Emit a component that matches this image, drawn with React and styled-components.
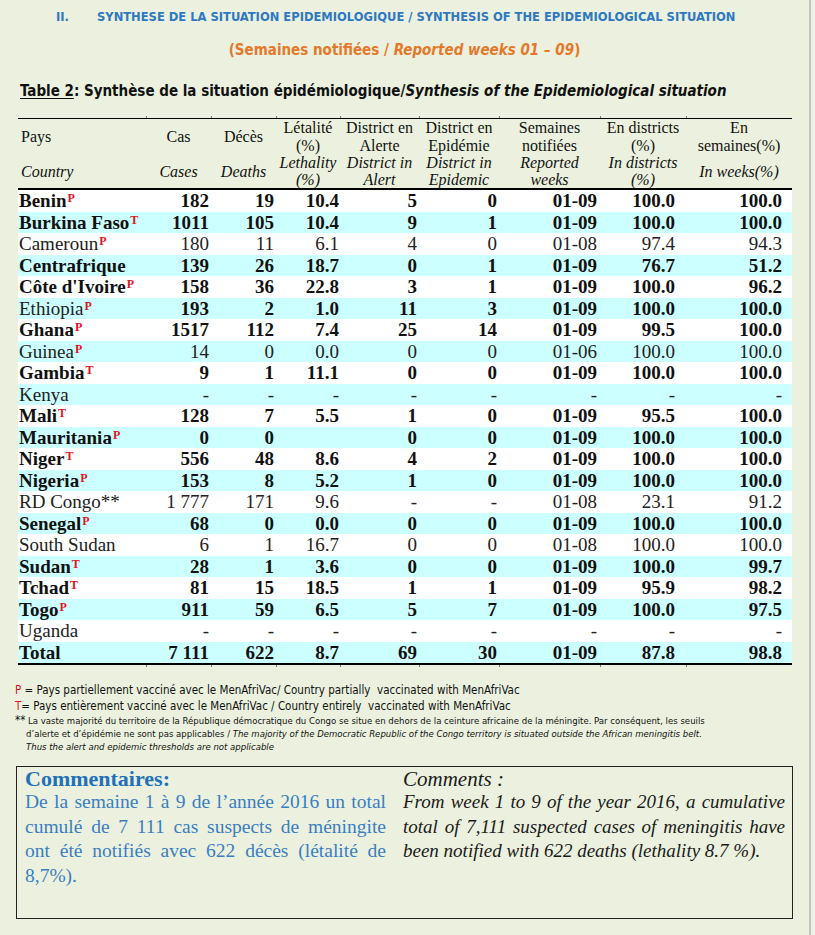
import React from "react";
import styled, { createGlobalStyle } from "styled-components";

const SANS = `"Liberation Sans Narrow", "DejaVu Sans Condensed", "Liberation Sans", sans-serif`;
const SERIF = `"Liberation Serif", "Times New Roman", serif`;

const GlobalStyle = createGlobalStyle`
  html, body { margin: 0; padding: 0; background: #eef0e8; }
  body { font-family: ${SERIF}; color: #111; }
`;

const Page = styled.div`
  width: 811px;
  min-height: 935px;
  box-sizing: border-box;
  padding-top: 8px;
  background: #ebf1de;
  border-right: 2px solid #c3c6bc;
`;

const SectionTitle = styled.h2`
  display: flex;
  margin: 0;
  padding-left: 56px;
  font: bold 12.8px/18px ${SANS};
  color: #2e78c2;
`;

const Roman = styled.span`
  width: 41px;
`;

const Weeks = styled.div`
  margin-top: 14px;
  text-align: center;
  font: bold 15px/20px ${SANS};
  color: #e4782b;
  em { font-style: italic; }
`;

const Caption = styled.div`
  margin-top: 21px;
  padding-left: 20px;
  font: bold 15px/20px ${SANS};
  color: #111;
  u { text-decoration-thickness: 1px; text-underline-offset: 2px; }
  em { font-style: italic; }
`;

const Table = styled.table`
  margin: 15px 0 0 18px;
  width: 774px;
  table-layout: fixed;
  border-collapse: separate;
  border-spacing: 0;
  font-family: ${SERIF};
`;

const TickRow = styled.tr`
  td {
    height: 2px;
    padding: 0;
    line-height: 0;
    font-size: 0;
  }
  td + td { box-shadow: inset 1px 0 #7a7a7a; }
`;

const HeadCell = styled.th`
  padding: 0 2px;
  padding-left: ${(p) => (p.$left ? "3px" : "2px")};
  font-size: 16px;
  line-height: ${(p) => (p.$en ? "17px" : "17.5px")};
  font-weight: normal;
  font-style: ${(p) => (p.$en ? "italic" : "normal")};
  text-align: ${(p) => (p.$left ? "left" : "center")};
  vertical-align: middle;
  white-space: nowrap;
  color: #111;
  height: ${(p) => (p.$en ? "34px" : "35px")};
  border-top: ${(p) => (p.$en ? "none" : "1px solid #000")};
  border-bottom: ${(p) => (p.$en ? "2px solid #000" : "none")};
`;

const Row = styled.tr`
  background: ${(p) => (p.$alt ? "#ccffff" : "#ffffff")};
  td {
    border-bottom: ${(p) => (p.$last ? "2px solid #000" : "none")};
  }
`;

const Cell = styled.td`
  height: 21.5px;
  padding: 0 ${(p) => p.$pr}px 0 ${(p) => (p.$name ? "1px" : "0")};
  font-size: 19px;
  line-height: 21px;
  font-weight: ${(p) => (p.$bold ? "bold" : "normal")};
  text-align: ${(p) => (p.$name ? "left" : "right")};
  color: ${(p) => (p.$bold ? "#111" : "#222")};
  white-space: nowrap;
  vertical-align: middle;
`;

const Sup = styled.sup`
  margin-left: 1px;
  font: bold 12px/0 ${SERIF};
  color: #e0141e;
  vertical-align: 5px;
`;

const Notes = styled.div`
  margin: 15px 0 0 15px;
  font-family: ${SANS};
  color: #111;
`;

const NoteLine = styled.div`
  font-size: 11.5px;
  line-height: 16px;
  white-space: nowrap;
`;

const Mark = styled.span`
  color: #e0141e;
`;

const SmallNote = styled.div`
  padding-left: 11px;
  text-indent: -11px;
  font-size: 9.5px;
  line-height: 13px;
  white-space: nowrap;
  b { font-weight: normal; font-size: 11.5px; }
  em { font-style: italic; }
`;

const CommentBox = styled.div`
  display: grid;
  grid-template-columns: 378px 1fr;
  width: 777px;
  height: 153px;
  box-sizing: border-box;
  margin: 13px 0 0 16px;
  border: 1px solid #222;
`;

const CommentCol = styled.div`
  padding: ${(p) => (p.$en ? "1px 7px 0 8px" : "1px 9px 0 8px")};
  font-family: ${SERIF};
  color: ${(p) => (p.$en ? "#1a1a1a" : "#3a7ec0")};
`;

const CommentHead = styled.div`
  font-size: ${(p) => (p.$en ? "21px" : "22px")};
  line-height: 22px;
  font-weight: ${(p) => (p.$en ? "normal" : "bold")};
  font-style: ${(p) => (p.$en ? "italic" : "normal")};
  color: ${(p) => (p.$en ? "#1a1a1a" : "#2270b8")};
`;

const CommentText = styled.p`
  margin: 0;
  font-size: ${(p) => (p.$en ? "19px" : "19.5px")};
  line-height: 24.6px;
  font-style: ${(p) => (p.$en ? "italic" : "normal")};
  text-align: justify;
`;

const COLS = [128, 65, 65, 64, 79, 80, 101, 86, 106];
const PAD = [0, 2, 2, 1, 2, 2, 3, 11, 10];

const HEAD_FR = [
  "Pays",
  "Cas",
  "Décès",
  ["Létalité", "(%)"],
  ["District en", "Alerte"],
  ["District en", "Epidémie"],
  ["Semaines", "notifiées"],
  ["En districts", "(%)"],
  ["En", "semaines(%)"],
];

const HEAD_EN = [
  "Country",
  "Cases",
  "Deaths",
  ["Lethality", "(%)"],
  ["District in", "Alert"],
  ["District in", "Epidemic"],
  ["Reported", "weeks"],
  ["In districts", "(%)"],
  "In weeks(%)",
];

const D = ["-", "-", "-", "-", "-", "-", "-", "-"];

// [country, sup, bold name, bold figures, figures]
const ROWS = [
  ["Benin", "P", true, true, ["182", "19", "10.4", "5", "0", "01-09", "100.0", "100.0"]],
  ["Burkina Faso", "T", true, true, ["1011", "105", "10.4", "9", "1", "01-09", "100.0", "100.0"]],
  ["Cameroun", "P", false, false, ["180", "11", "6.1", "4", "0", "01-08", "97.4", "94.3"]],
  ["Centrafrique", "", true, true, ["139", "26", "18.7", "0", "1", "01-09", "76.7", "51.2"]],
  ["Côte d'Ivoire", "P", true, true, ["158", "36", "22.8", "3", "1", "01-09", "100.0", "96.2"]],
  ["Ethiopia", "P", false, true, ["193", "2", "1.0", "11", "3", "01-09", "100.0", "100.0"]],
  ["Ghana", "P", true, true, ["1517", "112", "7.4", "25", "14", "01-09", "99.5", "100.0"]],
  ["Guinea", "P", false, false, ["14", "0", "0.0", "0", "0", "01-06", "100.0", "100.0"]],
  ["Gambia", "T", true, true, ["9", "1", "11.1", "0", "0", "01-09", "100.0", "100.0"]],
  ["Kenya", "", false, false, D],
  ["Mali", "T", true, true, ["128", "7", "5.5", "1", "0", "01-09", "95.5", "100.0"]],
  ["Mauritania", "P", true, true, ["0", "0", "", "0", "0", "01-09", "100.0", "100.0"]],
  ["Niger", "T", true, true, ["556", "48", "8.6", "4", "2", "01-09", "100.0", "100.0"]],
  ["Nigeria", "P", true, true, ["153", "8", "5.2", "1", "0", "01-09", "100.0", "100.0"]],
  ["RD Congo**", "", false, false, ["1\u00a0777", "171", "9.6", "-", "-", "01-08", "23.1", "91.2"]],
  ["Senegal", "P", true, true, ["68", "0", "0.0", "0", "0", "01-09", "100.0", "100.0"]],
  ["South Sudan", "", false, false, ["6", "1", "16.7", "0", "0", "01-08", "100.0", "100.0"]],
  ["Sudan", "T", true, true, ["28", "1", "3.6", "0", "0", "01-09", "100.0", "99.7"]],
  ["Tchad", "T", true, true, ["81", "15", "18.5", "1", "1", "01-09", "95.9", "98.2"]],
  ["Togo", "P", true, true, ["911", "59", "6.5", "5", "7", "01-09", "100.0", "97.5"]],
  ["Uganda", "", false, false, D],
  ["Total", "", true, true, ["7\u00a0111", "622", "8.7", "69", "30", "01-09", "87.8", "98.8"]],
];

function lines(v) {
  if (!Array.isArray(v)) return v;
  return v.map((t, i) => (
    <React.Fragment key={i}>
      {i > 0 && <br />}
      {t}
    </React.Fragment>
  ));
}

function Ticks() {
  return (
    <TickRow>
      {COLS.map((w, i) => (
        <td key={i} />
      ))}
    </TickRow>
  );
}

export default function App() {
  return (
    <>
      <GlobalStyle />
      <Page>
        <SectionTitle>
          <Roman>II.</Roman>
          SYNTHESE DE LA SITUATION EPIDEMIOLOGIQUE / SYNTHESIS OF THE EPIDEMIOLOGICAL SITUATION
        </SectionTitle>

        <Weeks>
          (Semaines notifiées / <em>Reported weeks 01 – 09</em>)
        </Weeks>

        <Caption>
          <u>Table 2</u>: Synthèse de la situation épidémiologique/
          <em>Synthesis of the Epidemiological situation</em>
        </Caption>

        <Table>
          <colgroup>
            {COLS.map((w, i) => (
              <col key={i} style={{ width: w }} />
            ))}
          </colgroup>
          <thead>
            <Ticks />
            <tr>
              {HEAD_FR.map((h, i) => (
                <HeadCell key={i} $left={i === 0}>
                  {lines(h)}
                </HeadCell>
              ))}
            </tr>
            <tr>
              {HEAD_EN.map((h, i) => (
                <HeadCell key={i} $en $left={i === 0}>
                  {lines(h)}
                </HeadCell>
              ))}
            </tr>
          </thead>
          <tbody>
            {ROWS.map(([name, sup, boldName, boldNums, vals], r) => (
              <Row key={name} $alt={r % 2 === 1} $last={r === ROWS.length - 1}>
                <Cell $name $bold={boldName} $pr={0}>
                  {name}
                  {sup && <Sup>{sup}</Sup>}
                </Cell>
                {vals.map((v, i) => (
                  <Cell key={i} $bold={boldNums} $pr={PAD[i + 1]}>
                    {v}
                  </Cell>
                ))}
              </Row>
            ))}
          </tbody>
          <tfoot>
            <Ticks />
          </tfoot>
        </Table>

        <Notes>
          <NoteLine>
            <Mark>P</Mark> = Pays partiellement vacciné avec le MenAfriVac/ Country partially&nbsp; vaccinated with MenAfriVac
          </NoteLine>
          <NoteLine>
            <Mark>T</Mark>= Pays entièrement vacciné avec le MenAfriVac / Country entirely&nbsp; vaccinated with MenAfriVac
          </NoteLine>
          <SmallNote>
            <b>**</b> La vaste majorité du territoire de la République démocratique du Congo se situe en dehors de la
            ceinture africaine de la méningite. Par conséquent, les seuils
            <br />
            d’alerte et d’épidémie ne sont pas applicables /
            <em>
              {" "}
              The majority of the Democratic Republic of the Congo territory is situated outside the African meningitis
              belt.
            </em>
            <br />
            <em>Thus the alert and epidemic thresholds are not applicable</em>
          </SmallNote>
        </Notes>

        <CommentBox>
          <CommentCol>
            <CommentHead>Commentaires:</CommentHead>
            <CommentText>
              De la semaine 1 à 9 de l’année 2016 un total cumulé de 7 111 cas suspects de méningite ont été notifiés
              avec 622 décès (létalité de 8,7%).
            </CommentText>
          </CommentCol>
          <CommentCol $en>
            <CommentHead $en>Comments :</CommentHead>
            <CommentText $en>
              From week 1 to 9 of the year 2016, a cumulative total of 7,111 suspected cases of meningitis have been
              notified with 622 deaths (lethality 8.7 %).
            </CommentText>
          </CommentCol>
        </CommentBox>
      </Page>
    </>
  );
}
